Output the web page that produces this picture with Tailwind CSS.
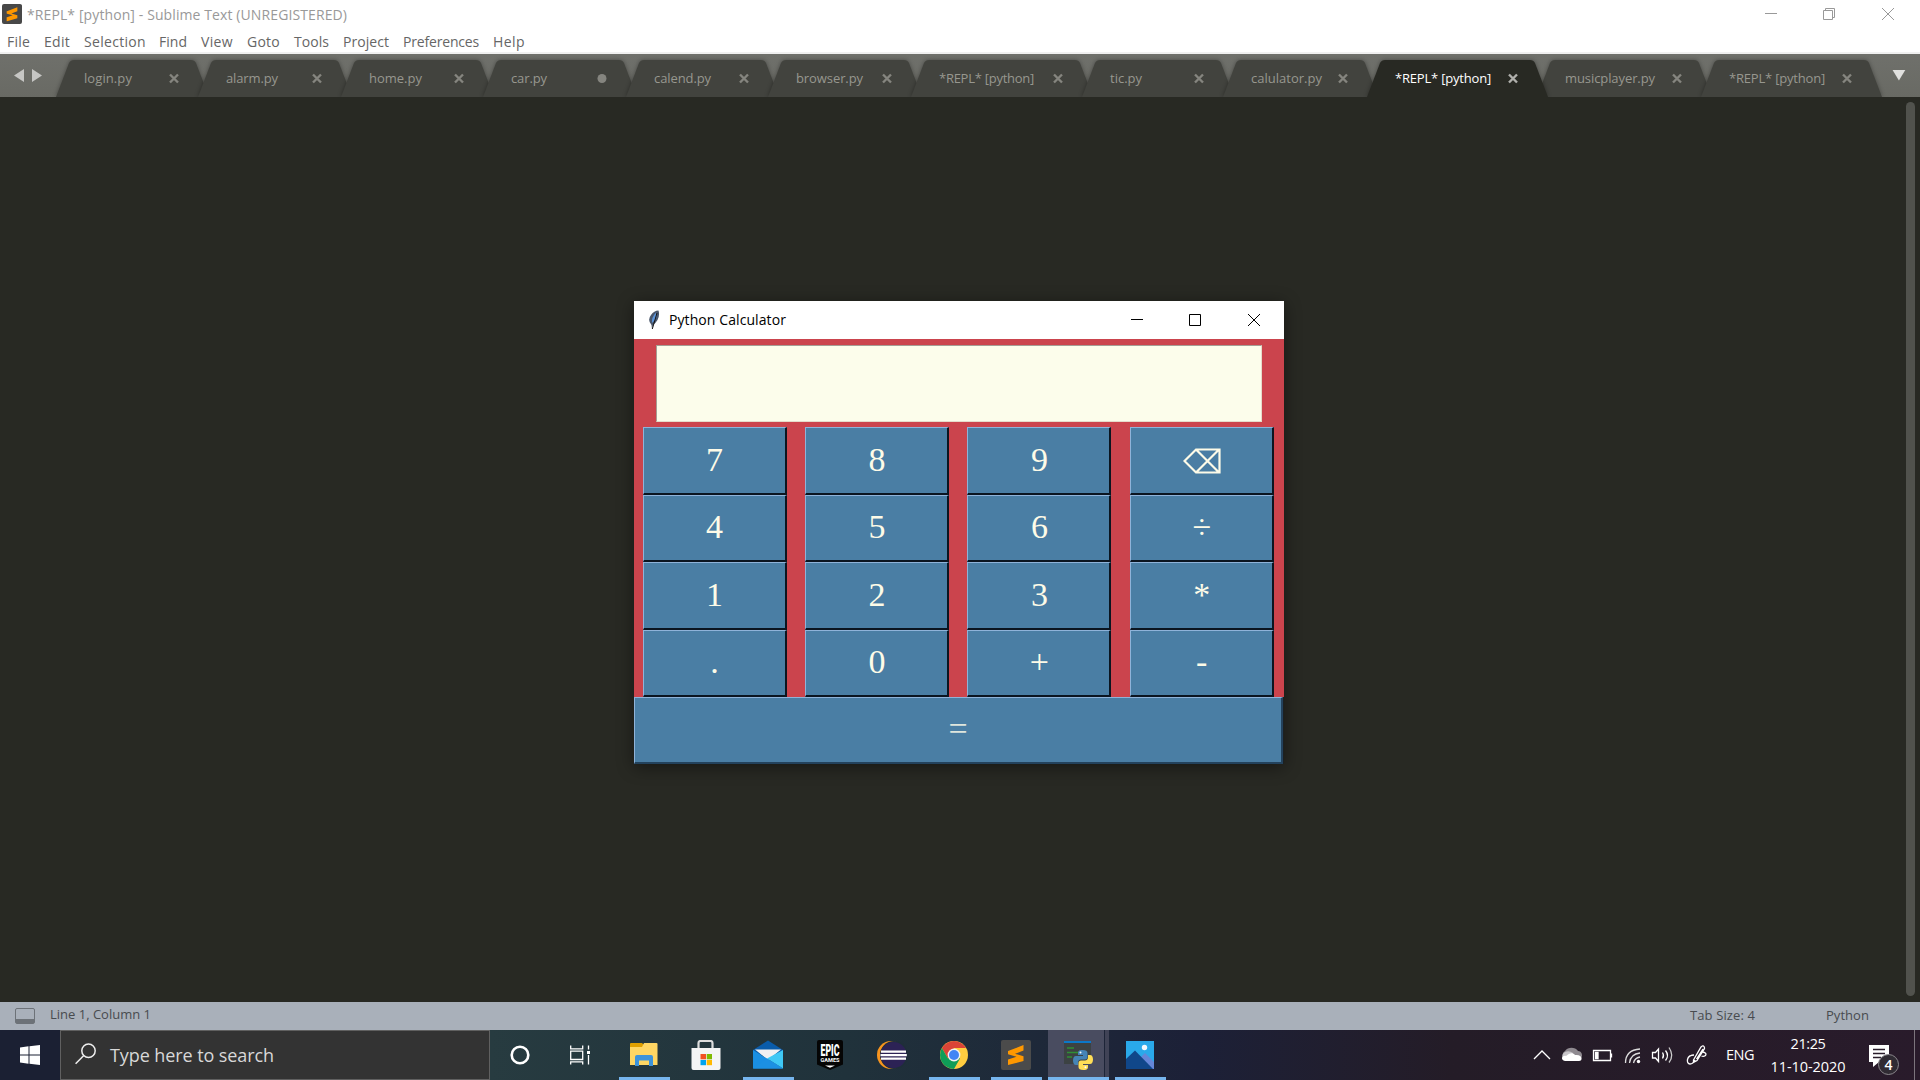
<!DOCTYPE html>
<html lang="en">
<head>
<meta charset="utf-8">
<title>Sublime Text</title>
<script src="https://cdn.jsdelivr.net/npm/@tailwindcss/browser@4"></script>
</head>
<body class="w-[1920px] h-[1080px] overflow-hidden flex flex-col bg-[#282923] font-['Open_Sans',sans-serif] text-[14px] relative">

<!-- title bar -->
<header class="h-[30px] shrink-0 bg-white flex items-center pl-[2px] text-[#999]">
  <svg class="w-5 h-5 -mt-[2px]" viewBox="0 0 30 30"><rect width="30" height="30" rx="3" fill="#484848"/><path d="M7 11 23 5v6l-9 3.3 9 2.4v4.600L7 26v-6l9-3-9-2.600z" fill="#ff9800"/></svg>
  <span class="ml-[5px] whitespace-nowrap leading-[30px]" data-w="320">*REPL* [python] - Sublime Text (UNREGISTERED)</span>
  <div class="ml-auto flex items-center h-full">
    <svg class="w-[58px] h-[30px]" viewBox="0 0 58 30" fill="none" stroke="#999"><path d="M25 13.500h12"/></svg>
    <svg class="w-[58px] h-[30px]" viewBox="0 0 58 30" fill="none" stroke="#999"><path d="M25.500 10.500h9v9h-9zM27.500 10.500v-2h9v9h-2"/></svg>
    <svg class="w-[64px] h-[30px]" viewBox="0 0 64 30" fill="none" stroke="#999"><path d="M26 8l12 12M38 8 26 20"/></svg>
  </div>
</header>
<nav id="menu" class="h-[24px] shrink-0 bg-white border-b-2 border-[#f0f0f0] flex pl-[7px] text-[#666] leading-[24px]"></nav>

<!-- tab strip -->
<div class="h-[43px] shrink-0 bg-linear-to-b from-[#6f706b] to-[#696a64] flex relative overflow-hidden">
  <svg class="w-[56px] h-[43px] shrink-0" viewBox="0 0 56 43" fill="#c6c6c4"><path d="M14 21.500 24 15v13zM42 21.500 32 15v13z"/></svg>
  <div id="tabs" class="flex h-full"></div>
  <svg class="w-[50px] h-[43px] ml-auto" viewBox="0 0 50 43" fill="#e0e0de"><path d="M22 16h13l-6.500 10.500z"/></svg>
</div>

<!-- editor -->
<main class="flex-1 flex justify-end pt-[5px] pb-[6px] pr-[5px]">
  <div class="w-[9px] h-full rounded-full bg-[#51524d]"></div>
</main>

<!-- status bar -->
<div class="h-7 shrink-0 bg-[#a9b0ba] flex items-center text-[13px] text-[#484b4f] pl-[15px]">
  <svg class="w-5 h-4" viewBox="0 0 20 16"><rect x=".5" y=".5" width="19" height="15" rx="1.500" fill="#a9b0ba" stroke="#6d7278"/><path d="M1 11h18v4H1z" fill="#6d7278"/></svg>
  <span class="ml-[15px] whitespace-nowrap -mt-[2px]" data-w="101">Line 1, Column 1</span>
  <span class="ml-auto whitespace-nowrap" data-w="65">Tab Size: 4</span>
  <span class="ml-[71px] mr-[51px] whitespace-nowrap" data-w="43">Python</span>
</div>

<!-- taskbar -->
<footer class="h-[50px] shrink-0 flex bg-[#1b2033] relative">
  <div class="w-[60px] h-full flex items-center justify-center bg-[#1b2033]">
    <svg class="w-5 h-5" viewBox="0 0 20 20" fill="#fff"><path d="M0 2.500 8.500 1.300V9.500H0zM9.500 1.200 20 0v9.500H9.500zM0 10.500h8.500v8.200L0 17.500zM9.500 10.500H20V20L9.500 18.800z"/></svg>
  </div>
  <div class="w-[430px] h-[50px] bg-[#333] border border-[#606060] flex items-center text-[18px] text-[#d8d8d8]">
    <svg class="w-[22px] h-[22px] ml-[14px] -mt-[2px]" viewBox="0 0 22 22" fill="none" stroke="#eee" stroke-width="1.500"><circle cx="13.500" cy="7.700" r="6.700"/><path d="M8.800 12.500.600 20.800"/></svg>
    <span class="ml-[13px] whitespace-nowrap" data-w="164">Type here to search</span>
  </div>
  <div class="flex h-full bg-linear-to-r from-[#273b40] from-0% via-[#20323b] via-[50%] to-[#1c2037] to-100% pr-[29px]">
    <div class="w-[60px] flex items-center justify-center"><svg class="w-5 h-5" viewBox="0 0 20 20"><circle cx="10" cy="10" r="8.300" fill="none" stroke="#fff" stroke-width="2.600"/></svg></div>
    <div class="w-[60px] flex items-center justify-center"><svg class="w-5 h-5" viewBox="0 0 20 20" fill="none" stroke="#fff" stroke-width="1.300"><path d="M.700.500v3.300h12V.500M.700 6.200h12v8.300H.700zM.700 19.500v-2.700h12v2.700M18.500.500v4M18.500 10v9.500"/><path d="M17 6h3v3h-3z" fill="#fff" stroke="none"/></svg></div>
    <!-- file explorer -->
    <div class="w-[62px] ml-[3px] flex items-center justify-center relative"><svg class="w-7 h-7" viewBox="0 0 28 28"><path d="M0 4V3q0-1 1-1h11l2 2h13v3H0z" fill="#e0a000"/><path d="M0 6h12l2-4h12.500q1 0 1 1v21H0z" fill="#ffd663"/><path d="M5 25V16q0-2 2-2h14q2 0 2 2v9h-4v-5.500h-10V25z" fill="#3d93da"/></svg><i class="absolute bottom-0 left-[6px] w-[51px] h-[3px] bg-[#76b5ee]"></i></div>
    <!-- store -->
    <div class="w-[62px] flex items-center justify-center"><svg class="w-[30px] h-[30px]" viewBox="0 0 30 30"><path d="M7.500 10V3q0-2 2-2h10q2 0 2 2v7" fill="none" stroke="#ddd" stroke-width="2.200"/><path d="M.500 8h29v20q0 2-2 2h-25q-2 0-2-2z" fill="#f4f4f4"/><path d="M9.500 14H15v5.300H9.500z" fill="#f25022"/><path d="M15.700 14H21v5.300h-5.300z" fill="#7fba00"/><path d="M9.500 20H15v5.200H9.500z" fill="#00a4ef"/><path d="M15.700 20H21v5.200h-5.300z" fill="#ffb900"/></svg></div>
    <!-- mail -->
    <div class="w-[62px] flex items-center justify-center relative"><svg class="w-[30px] h-[30px]" viewBox="0 0 30 30"><path d="M0 10 15 .500 30 10v5H0z" fill="#0a5cab"/><path d="M2 9.500h26L15 20z" fill="#f0f0f2"/><path d="M0 10 30 28.500H0z" fill="#1a8fe3"/><path d="M30 10v18.500L14 18.500z" fill="#3fc8f5"/><path d="M0 28.500 14 18.500 30 28.500z" fill="#1c90e2"/></svg><i class="absolute bottom-0 left-[6px] w-[51px] h-[3px] bg-[#76b5ee]"></i></div>
    <!-- epic -->
    <div class="w-[62px] flex items-center justify-center"><svg class="w-[26px] h-[30px]" viewBox="0 0 26 30"><path d="M2 0h22q2 0 2 2v22.500L13 30 0 24.500V2q0-2 2-2z" fill="#050505"/><text x="13" y="16" text-anchor="middle" font-family="Roboto" font-weight="900" font-size="16" fill="#fff" textLength="19" lengthAdjust="spacingAndGlyphs">EPIC</text><text x="13" y="22" text-anchor="middle" font-family="Roboto" font-weight="700" font-size="5" fill="#fff" textLength="19" lengthAdjust="spacingAndGlyphs">GAMES</text><path d="M8 25.500h10l-5 2.200z" fill="#fff"/></svg></div>
    <!-- eclipse -->
    <div class="w-[62px] flex items-center justify-center"><svg class="w-[30px] h-7" viewBox="0 0 30 28"><circle cx="14" cy="14" r="14" fill="#f7941e"/><circle cx="17" cy="14" r="14" fill="#1f2f39"/><circle cx="16.500" cy="14" r="13" fill="#2c2255"/><path d="M4 9.500h25v2.200H4zM3.500 13h26.300v2.200H3.500zM4 16.500h25v2.200H4z" fill="#fff"/></svg></div>
    <!-- chrome -->
    <div class="w-[62px] flex items-center justify-center relative"><svg class="w-7 h-7" viewBox="0 0 28 28"><circle cx="14" cy="14" r="14" fill="#ffcd40"/><path d="M14 7H26.100A14 14 0 0 0 1.900 7L8 17.500z" fill="#db4437"/><path d="M1.900 7A14 14 0 0 0 14 28L20 17.500 14 14 8 17.500z" fill="#0f9d58"/><circle cx="14" cy="14" r="6.400" fill="#f1f1f1"/><circle cx="14" cy="14" r="5" fill="#4285f4"/></svg><i class="absolute bottom-0 left-[6px] w-[51px] h-[3px] bg-[#76b5ee]"></i></div>
    <!-- sublime -->
    <div class="w-[62px] flex items-center justify-center relative"><svg class="w-[30px] h-[30px]" viewBox="0 0 30 30"><rect width="30" height="30" rx="2" fill="#4b4b4b"/><path d="M7 11 22.500 5v5.500l-8.500 3.300 8.500 2.400v4.800L7 25v-5.500l8.500-2.800L7 14.300z" fill="#ff9800"/></svg><i class="absolute bottom-0 left-[6px] w-[51px] h-[3px] bg-[#76b5ee]"></i></div>
    <!-- python -->
    <div class="w-[62px] flex items-center justify-center relative"><i class="absolute top-0 left-px w-[56px] h-full bg-[#494c60]"></i><i class="absolute top-0 left-[58px] w-[4px] h-full bg-[#404356]"></i><i class="absolute bottom-0 left-px w-[61px] h-[3px] bg-[#76b5ee]"></i>
      <svg class="w-[29px] h-[29px] relative" viewBox="0 0 29 29"><path d="M0 1h27v22H0z" fill="#3c4243"/><path d="M0 0h27v2H0z" fill="#0b78c8"/><path d="M3 7h7M3 11.500h13M3 16h5" stroke="#2f8f35" stroke-width="1.300"/><path d="M18.500 9c-4 0-4.500 1.500-4.500 3v2h5v1h-7c-2 0-3 2-3 4.500s1 4.500 3 4.500h2v-2.500c0-2 1.500-3 3-3h4c1.500 0 2.500-1 2.500-2.500v-4c0-2-1.500-3-5-3z" fill="#4584b6"/><path d="M19.500 29c4 0 4.500-1.500 4.500-3v-2h-5v-1h7c2 0 3-2 3-4.500s-1-4.500-3-4.500h-2v2.500c0 2-1.500 3-3 3h-4c-1.500 0-2.500 1-2.500 2.500v4c0 2 1.500 3 5 3z" fill="#ffde57"/><circle cx="16.500" cy="11.500" r="1" fill="#fff"/><circle cx="21.500" cy="26.300" r="1" fill="#fff"/></svg></div>
    <!-- photos -->
    <div class="w-[62px] flex items-center justify-center relative"><svg class="w-7 h-7" viewBox="0 0 28 28"><path d="M0 0h28v28H0z" fill="#2aa9ea"/><path d="M13 18 19 12 28 21v7H13z" fill="#6586d8"/><path d="M0 18 9 9.500 27 28H0z" fill="#10478a"/><circle cx="18.500" cy="6.500" r="2.700" fill="#f3f8fc"/></svg><i class="absolute bottom-0 left-[6px] w-[51px] h-[3px] bg-[#76b5ee]"></i></div>
  </div>
  <div class="flex-1 flex items-center bg-linear-to-r from-[#1c2037] from-0% via-[#241c27] via-[35%] to-[#291b2b] justify-end text-white relative">
    <svg class="w-[190px] h-[50px]" viewBox="1530 0 190 50" fill="none" stroke="#fff" stroke-width="1.300">
      <path d="M1534 29l8-8 8 8"/>
      <path d="M1564 29a5 5 0 0 1 1-8 8 8 0 0 1 13 0c4 0 5 5 3 7z" fill="#8f8a90" stroke="none"/><path d="M1563 29a5 5 0 0 1 2-7q4-2 8 1l-5 6z" fill="#c9c6ca" stroke="none"/><path d="M1565 31c-5-1-3-6 1-5 3-3 7-4 9-1 8-1 8 6 4 6z" fill="#fff" stroke="none"/>
      <path d="M1593.500 20.500h17v10h-17zM1611.500 23.500v4"/><path d="M1595.500 22.500h2.500v6h-2.500z" fill="#fff"/>
      <path d="M1625.500 33q0-13 14.500-14M1629.500 33q1-9 10.500-10M1633.500 33q1-5 6.500-6" stroke="#ddd"/><circle cx="1638.500" cy="31.500" r="1.700" fill="#fff" stroke="none"/>
      <path d="M1652.500 22.500h3l3-3.500v12.500l-3-3.500h-3zM1662.500 22.500q2 3 0 6M1665.500 20.500q4 5 0 10"/><path d="M1669 17.500q5.500 8 0 15" stroke="#ccc"/>
      <path d="M1693.500 30 1701 17q2-2 3-.500t0 3l-7 11-3.500 2zM1696.500 29 1703 19M1694 25c-8 0-8 9-4 9 3 0 4-2 5-4M1703 22q4 1 2.500 3.500-2 1.500-4 .500"/>
    </svg>
    <div class="w-[49px] shrink-0 pl-[6px] text-[14.500px]"><span data-w="28">ENG</span></div>
    <div class="w-[78px] flex flex-col items-center text-[14.500px] leading-[23px] whitespace-nowrap pb-px"><span data-w="35">21:25</span><span data-w="75">11-10-2020</span></div>
    <svg class="w-[67px] h-[50px] shrink-0" viewBox="1847 0 67 50"><path d="M1869 15h20v17h-10l-6 5v-5h-4z" fill="#fff"/><path d="M1873 19.500h12M1873 23.500h12M1873 27.500h8" stroke="#2a1d2b" stroke-width="1.300"/><circle cx="1888.500" cy="34.500" r="10" fill="#302b33" stroke="#8a878c"/><text x="1888.500" y="39.500" text-anchor="middle" font-family="Open Sans" font-weight="600" font-size="14" fill="#fff">4</text></svg>
    <div class="w-[6px] h-full border-l border-[#7c757d]"></div>
  </div>
</footer>

<!-- floating calculator window -->
<section class="absolute left-[634px] top-[301px] w-[650px] h-[463px] shadow-[0_3px_16px_rgba(0,0,0,0.45)] flex flex-col bg-[#1c2022]">
  <div class="h-[38px] shrink-0 bg-white flex items-center pl-[14px] text-black">
    <svg class="w-[12px] h-5" viewBox="0 0 12 20"><path d="M4 19 3.500 15Q-1 10 3 5 6 .500 10.500.500 12 5 9.500 10 7 14 5 15z" fill="#49566b"/><path d="M4 13Q3 8 8 2.500q2 3-1 7.500z" fill="#5b93d8"/><path d="M9 3 4.300 19" stroke="#111" stroke-width="1"/></svg>
    <span class="ml-[9px] whitespace-nowrap leading-[38px]" data-w="117">Python Calculator</span>
    <svg class="ml-auto w-[177px] h-[38px]" viewBox="0 0 177 38" fill="none" stroke="#000"><path d="M24 18.500h12M82.500 13.500h11v11h-11zM141 13l12 12M153 13l-12 12"/></svg>
  </div>
  <div class="h-[358px] shrink-0 bg-[#cb444d] flex flex-col pt-[6px]">
    <div class="ml-[22px] w-[606px] h-[77px] shrink-0 bg-[#fcfdeb] border border-t-[#a59e94] border-l-[#a59e94] border-b-[#e5dccb] border-r-[#e5dccb]"></div>
    <div id="keys" class="mt-[5px] pl-[8.600px] shrink-0 grid grid-cols-[162.400px_162.400px_162.400px_144px] grid-rows-[68px_67px_68px_67px] font-['Liberation_Serif',serif] text-[34px] text-[#fdfbe8]"></div>
  </div>
  <div class="h-[67px] w-[649px] bg-[#4a7ea4] border-t border-l border-[#8fb3d9] border-b-2 border-r-2 border-b-[#23425c] border-r-[#23425c] flex items-center justify-center font-['Liberation_Serif',serif] text-[34px] text-[#dfe6dd] pb-[3px]">=</div>
</section>

<script>
const menu = [['File',37,23],['Edit',40,26],['Selection',75,62],['Find',42,28],['View',46,32],['Goto',47,33],['Tools',49,35],['Project',60,46],['Preferences',90,76],['Help',40,32]];
document.getElementById('menu').innerHTML = menu.map(([t, w, tw]) =>
  `<span class="shrink-0" style="width:${w}px"><span data-w="${tw}">${t}</span></span>`).join('');

const tabs = [['login.py',142,48],['alarm.py',143,52],['home.py',142,53],['car.py',143,36],['calend.py',142,57],['browser.py',143,67],['*REPL* [python]',171,95],['tic.py',141,32],['calulator.py',144,71],['*REPL* [python]',170,96],['musicplayer.py',164,90],['*REPL* [python]',170,96]];
document.getElementById('tabs').innerHTML = tabs.map(([t, w, tw], i) => {
  const on = i === 9, W = w + 11;
  const mark = i === 3 ? `<circle cx="${w-24}" cy="24.500" r="4.500" fill="#85857f"/>`
    : `<path d="M${w-28} 20.500l8 8M${w-20} 20.500l-8 8" stroke="${on ? '#b0b0ac' : '#85857f'}" stroke-width="2.400"/>`;
  return `<div class="relative shrink-0 h-full ${on ? 'z-10' : ''}" style="width:${w}px">
    <svg class="absolute left-0 top-0 overflow-visible drop-shadow-[0_0_2px_rgba(0,0,0,0.35)]" width="${W}" height="43"><path d="M0 43 13 9Q14.500 6 18 6H${W-18}Q${W-14.5} 6 ${W-13} 9L${W} 43z" fill="${on ? '#282923' : '#42433e'}"/>${mark}</svg>
    <span class="absolute left-[28px] top-[6px] leading-[37px] text-[13px] whitespace-nowrap ${on ? 'text-white' : 'text-[#97978f]'}"><span data-w="${tw}">${t}</span></span></div>`;
}).join('');

const keys = ['7','8','9','⌫','4','5','6','÷','1','2','3','*','.','0','+','-'];
const erase = '<svg class="w-[38px] h-[26px] mt-[3px]" viewBox="0 0 38 26" fill="none" stroke="#fdfbe8" stroke-width="2.200"><path d="M1.500 13 13 1.500h23.500v23H13zM13 1.500l23 23M36 1.500l-23 23"/></svg>';
document.getElementById('keys').innerHTML = keys.map(k =>
  `<div class="w-[144px] h-full bg-[#4a7ea4] border-t border-l border-t-[#8fb3d9] border-l-[#8fb3d9] border-b-2 border-r-2 border-b-[#0b1520] border-r-[#0b1520] flex items-center justify-center pb-[3px] pl-px">${k === '⌫' ? erase : k}</div>`).join('');

function fit() {
  document.querySelectorAll('[data-w]').forEach(e => {
    e.style.letterSpacing = '0px';
    const r = document.createRange(); r.selectNodeContents(e);
    e.style.letterSpacing = (e.dataset.w - r.getBoundingClientRect().width) / e.textContent.length + 'px';
  });
}
fit();
addEventListener('load', fit);
document.fonts.ready.then(fit);
new ResizeObserver(fit).observe(document.querySelector('section'));
[50, 200, 500].forEach(t => setTimeout(fit, t));
</script>
</body>
</html>
